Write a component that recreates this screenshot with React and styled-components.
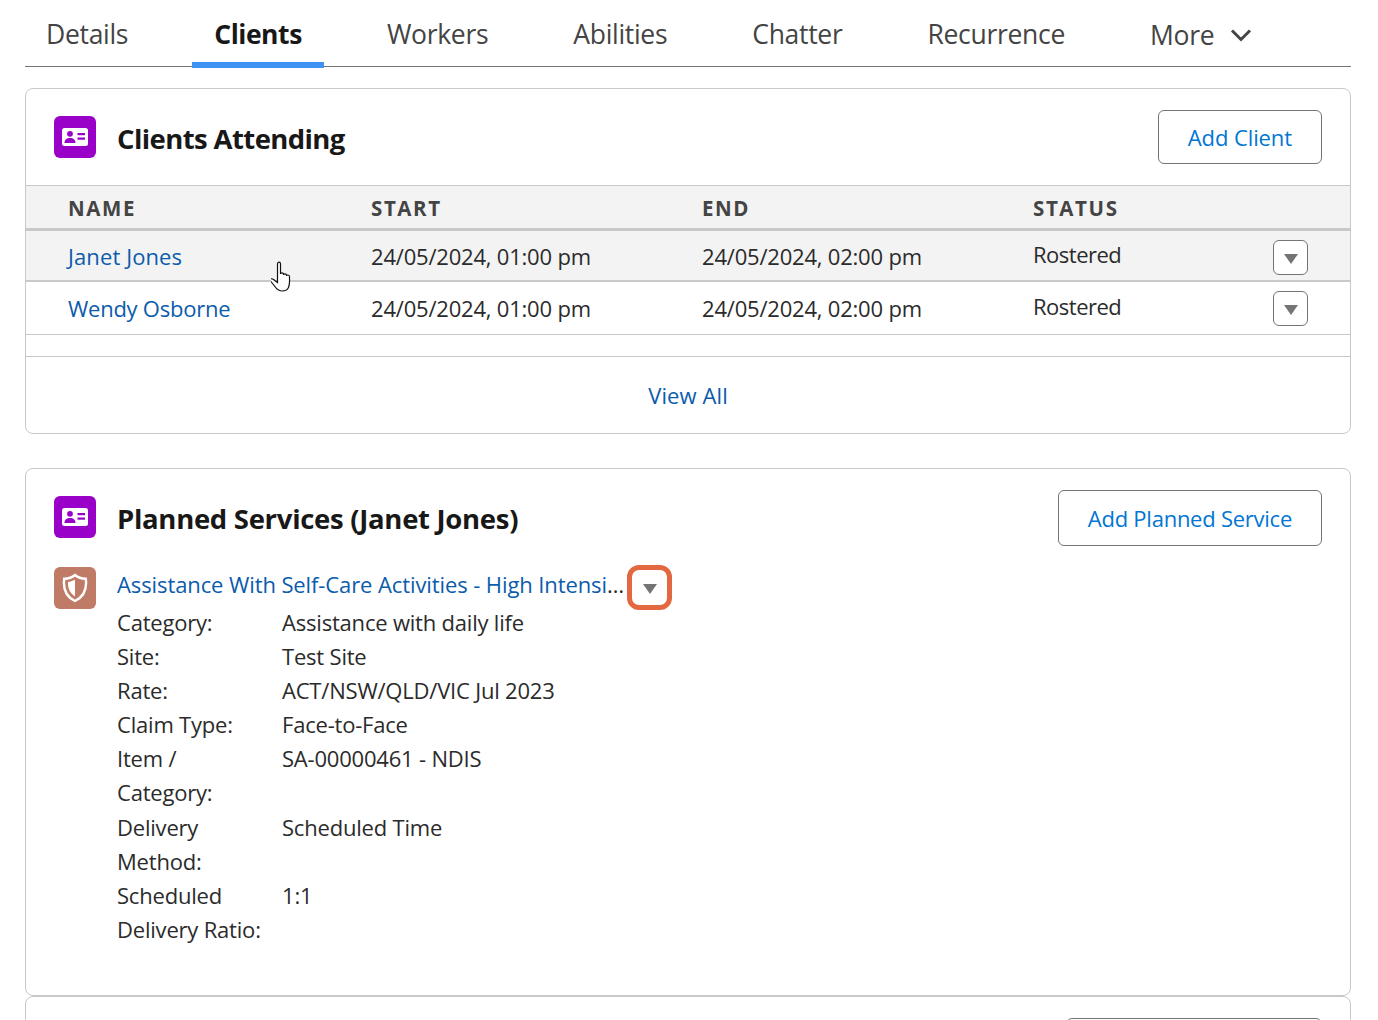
import React from "react";
import styled, { createGlobalStyle } from "styled-components";

const Global = createGlobalStyle`
  html, body { margin: 0; padding: 0; background: #fff; height: 1020px; overflow: hidden; }
  body { font-family: "Open Sans", "Noto Sans", sans-serif; color: #2b2b2b; font-size: 22px; }
  * { box-sizing: border-box; }
`;

const Page = styled.div`padding: 0 27px 0 25px;`;
const Tabs = styled.nav`
  display: flex; gap: 41px; height: 67px; border-bottom: 1px solid #747474; align-items: stretch;
`;
const Tab = styled.div`
  padding: 5px 22px 0; height: 68px; display: flex; align-items: center; gap: 16px;
  font-size: 26.5px; letter-spacing: ${p => (p.$active ? -0.45 : -0.3)}px; color: ${p => (p.$active ? "#181818" : "#444")};
  font-weight: ${p => (p.$active ? 700 : 400)};
  margin-left: ${p => (p.$active ? 1 : 0)}px;
  border-bottom: 6px solid ${p => (p.$active ? "#3f92f2" : "transparent")};
`;
const FirstTab = styled(Tab)`margin-left: -1px;`;
const MoreTab = styled(Tab)`padding-top: 8px;`;
const Card = styled.section`
  border: 1px solid #c9c9c9; border-radius: 8px; background: #fff;
`;
const FirstCard = styled(Card)`margin-top: 21px; height: 346px;`;
const SecondCard = styled(Card)`margin-top: 34px; height: 528px; padding: 0 28px;`;
const ThirdCard = styled(Card)`margin-top: 0; height: 60px; padding: 21px 28px 0; display: flex; justify-content: flex-end;`;
const CardHead = styled.header`
  display: flex; align-items: center; gap: 21px; height: ${p => p.$h}px; padding: 0 ${p => p.$pad}px;
`;
const Title = styled.h2`
  margin: 0; flex: 1; font-size: 27.5px; font-weight: 700; color: #181818; letter-spacing: ${p => p.$ls}px; position: relative; top: ${p => p.$top}px;
`;
const OutlineBtn = styled.button`
  font: inherit; font-size: 22px; letter-spacing: ${p => p.$ls ?? -0.1}px; color: #0176d3; background: #fff; border: 1px solid #747474; border-radius: 6px;
  height: ${p => p.$h}px; padding: 0 29px; white-space: nowrap;
`;
const GhostBtn = styled(OutlineBtn)`height: 40px; width: 256px; flex: none;`;
const IconTile = styled.span`
  flex: none; width: 42px; height: 42px; border-radius: 6px; background: ${p => p.$bg};
  display: flex; align-items: center; justify-content: center;
  margin-bottom: ${p => p.$up || 0}px;
`;
const Row = styled.div`
  display: grid; grid-template-columns: 303px 331px 331px 1fr 35px; align-items: center; padding: 0 42px;
  height: ${p => p.$h}px; background: ${p => (p.$shade ? "#f3f3f3" : "#fff")};
  border-top: ${p => p.$top || "none"};
  border-bottom: ${p => p.$bottom || "none"};
`;
const Th = styled.div`
  font-size: 20.5px; font-weight: 700; letter-spacing: 1.6px; color: #444; padding-top: 2px;
`;
const Cell = styled.div`font-size: 22px; letter-spacing: -0.2px; color: #2b2b2b; position: relative;`;
const StatusCell = styled(Cell)`top: -2px; letter-spacing: -0.5px;`;
const Link = styled.a`color: #0b5cab; font-size: 22px; letter-spacing: ${p => p.$ls ?? -0.1}px;`;
const Drop = styled.button`
  width: 35px; height: 35px; padding: 0; background: #fff; border: 1px solid #747474;
  border-radius: 6px; display: flex; align-items: center; justify-content: center;
  margin-top: ${p => p.$shift || 0}px;
`;
const Caret = styled.span`
  width: 0; height: 0; margin-top: 3px; border-left: 7.5px solid transparent; border-right: 7.5px solid transparent; border-top: 10px solid #747474;
`;
const Spacer = styled.div`height: 22px; border-bottom: 1px solid #c9c9c9;`;
const Foot = styled.div`
  height: 76px; display: flex; align-items: center; justify-content: center;
`;
const Cursor = styled.svg`
  position: absolute; left: 271px; top: 261px; width: 24px; height: 32px;
`;
const ServiceHead = styled.div`display: flex; align-items: center; gap: 21px; height: 42px; margin-top: 1px;`;
const ServiceName = styled.div`
  width: 510px; white-space: nowrap; overflow: hidden; text-overflow: ellipsis; color: #2b2b2b; font-size: 22px; line-height: 30px; margin-top: -8px;
`;
const FocusDrop = styled(Drop)`
  width: 45px; height: 45px; margin: -2px 0 0 -21px; border: 5px solid #e4683f; border-radius: 12px; flex: none;
`;
const Details = styled.dl`
  display: grid; grid-template-columns: 165px 1fr; margin: -4px 0 0 63px; line-height: 34.1px; font-size: 22px; letter-spacing: -0.2px;
`;
const Dt = styled.dt`color: #2b2b2b; width: 150px;`;
const Dd = styled.dd`margin: 0; color: #2b2b2b;`;

const IdCard = () => (
  <svg width="28" height="20" viewBox="0 0 28 20" fill="none">
    <rect x="1" y="1" width="26" height="18" rx="2.5" fill="#fff" />
    <circle cx="9" cy="6.8" r="2.9" fill="#9900c8" />
    <path d="M3.500 16c0-3.500 2.200-5 5.500-5s5.500 1.500 5.500 5z" fill="#9900c8" />
    <rect x="16.500" y="6" width="7.500" height="2.200" fill="#9900c8" />
    <rect x="16.500" y="10.500" width="7.500" height="2.200" fill="#9900c8" />
  </svg>
);
const Shield = () => (
  <svg width="26" height="30" viewBox="0 0 26 30" fill="none">
    <path d="M13 2c2.800 2.500 6.500 3.800 10.800 3.800 1.200 9-1 17.500-10.800 22.200C3.200 23.300 1 14.800 2.200 5.800 6.500 5.800 10.200 4.500 13 2z" stroke="#fff" strokeWidth="2.400" />
    <path d="M13 6.500c-2 1.300-4.300 2.200-7 2.500-.2 6 1.400 10.800 7 14.500z" fill="#fff" />
  </svg>
);

const rows = [
  { name: "Janet Jones", ls: 0.1, shade: true, h: 53, shift: 3, bottom: "2px solid #c9c9c9", top: "2px solid #c9c9c9" },
  { name: "Wendy Osborne", ls: -0.25, shade: false, h: 53, bottom: "1px solid #c9c9c9" },
];
const details = [
  ["Category:", "Assistance with daily life"],
  ["Site:", "Test Site"],
  ["Rate:", "ACT/NSW/QLD/VIC Jul 2023"],
  ["Claim Type:", "Face-to-Face"],
  ["Item / Category:", "SA-00000461 - NDIS"],
  ["Delivery Method:", "Scheduled Time"],
  ["Scheduled Delivery Ratio:", "1:1"],
];

export default function App() {
  return (
    <Page>
      <Global />
      <Tabs>
        <FirstTab>Details</FirstTab>
        <Tab $active>Clients</Tab>
        <Tab>Workers</Tab>
        <Tab>Abilities</Tab>
        <Tab>Chatter</Tab>
        <Tab>Recurrence</Tab>
        <MoreTab>
          More
          <svg width="22" height="14" viewBox="0 0 22 14" fill="none"><path d="M2 2.500l9 9 9-9" stroke="#444" strokeWidth="3" /></svg>
        </MoreTab>
      </Tabs>
      <FirstCard>
        <CardHead $h={96} $pad={28}>
          <IconTile $bg="#9900c8"><IdCard /></IconTile>
          <Title $ls={-0.6} $top={1}>Clients Attending</Title>
          <OutlineBtn $h={54}>Add Client</OutlineBtn>
        </CardHead>
        <Row $shade $h={44} $top="1px solid #c9c9c9" $bottom="1px solid #c9c9c9">
          <Th>NAME</Th><Th>START</Th><Th>END</Th><Th>STATUS</Th>
        </Row>
        {rows.map(r => (
          <Row key={r.name} $shade={r.shade} $h={r.h} $top={r.top} $bottom={r.bottom}>
            <Link $ls={r.ls}>{r.name}</Link>
            <Cell>24/05/2024, 01:00 pm</Cell>
            <Cell>24/05/2024, 02:00 pm</Cell>
            <StatusCell>Rostered</StatusCell>
            <Drop $shift={r.shift}><Caret /></Drop>
          </Row>
        ))}
        <Spacer />
        <Foot><Link $ls={0.1}>View All</Link></Foot>
      </FirstCard>
      <Cursor viewBox="0 0 24 32" fill="#fff" stroke="#111" strokeWidth="1.200">
        <path d="M6.500 3c0-2.500 3-2.500 3 0v10c0-1.500 3-1.500 3 0v1c0-1.500 3-1.500 3 0v1c0-1.500 3-1.300 3 .5 0 5 .5 8-1 11-1 2-3 3.500-6 3.500-4 0-6-2-8-5l-4-5c-1-2 1-3 3-1.500l4 3z" />
      </Cursor>
      <SecondCard>
        <CardHead $h={97} $pad={0}>
          <IconTile $bg="#9900c8" $up={1}><IdCard /></IconTile>
          <Title $ls={-0.3} $top={1}>Planned Services (Janet Jones)</Title>
          <OutlineBtn $h={56} $ls={-0.25}>Add Planned Service</OutlineBtn>
        </CardHead>
        <ServiceHead>
          <IconTile $bg="#bf7b66"><Shield /></IconTile>
          <ServiceName><Link>Assistance With Self-Care Activities - High Intensity Daily Personal Activities</Link></ServiceName>
          <FocusDrop><Caret /></FocusDrop>
        </ServiceHead>
        <Details>
          {details.map(([k, v]) => (
            <React.Fragment key={k}><Dt>{k}</Dt><Dd>{v}</Dd></React.Fragment>
          ))}
        </Details>
      </SecondCard>
      <ThirdCard><GhostBtn aria-label="Add" /></ThirdCard>
    </Page>
  );
}
